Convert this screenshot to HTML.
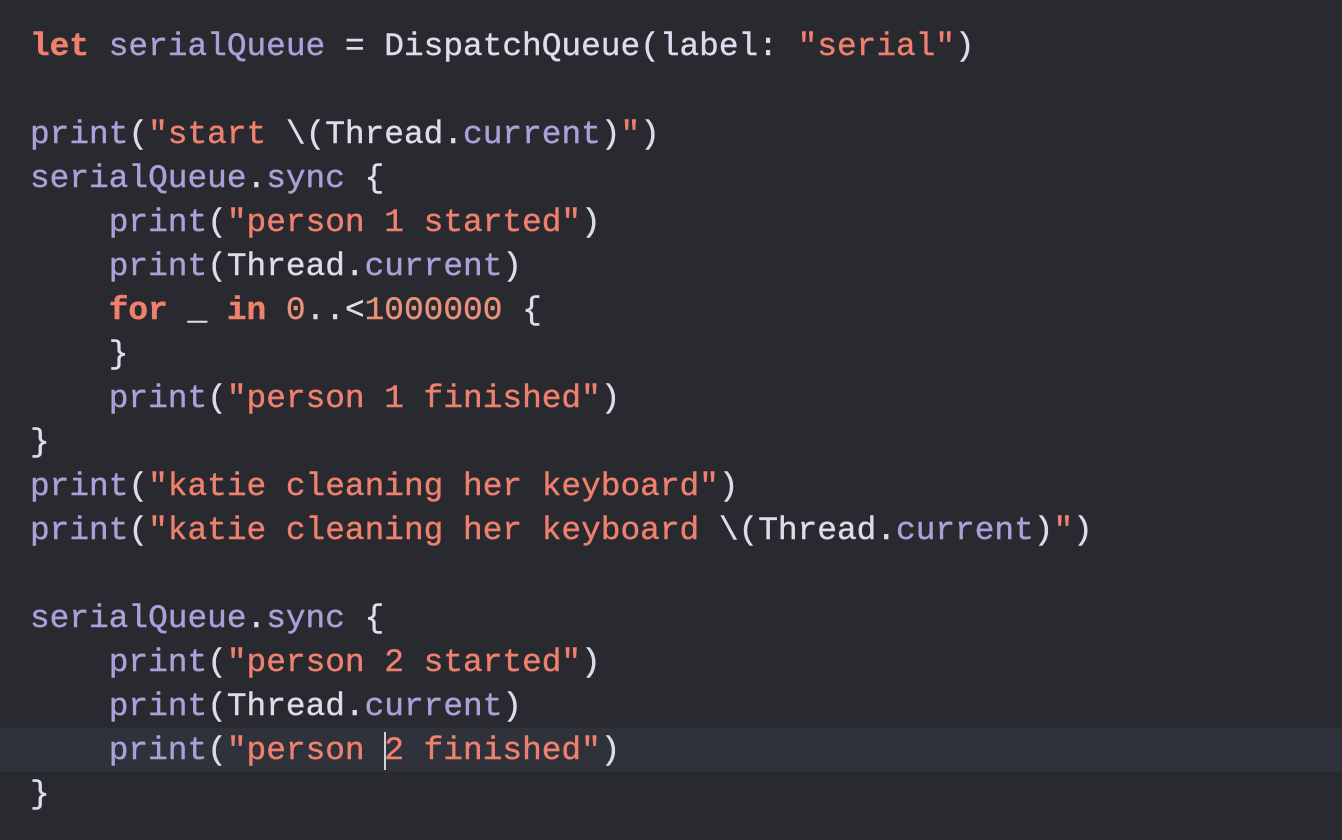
<!DOCTYPE html><html><head><style>
body{margin:0;width:1342px;height:840px;background:#292a30;overflow:hidden;font-family:"Liberation Mono",monospace;}
.l{position:absolute;left:30px;height:44px;line-height:44px;font-size:32.8px;white-space:pre;color:#dcdcec;-webkit-text-stroke:0.4px currentColor}
.p{color:#a8a2d8}.s{color:#f0806e}.k{color:#f0806e;font-weight:bold}.n{color:#e9917a}
.hl{position:absolute;left:0;top:728px;width:1342px;height:44px;background:#2f323a}
.cur{position:absolute;left:384px;top:732px;width:2px;height:38px;background:#d0d0e0}
</style></head><body>
<div class="hl"></div>
<div class="l" style="top:25px"><span class="k">let</span> <span class="p">serialQueue</span> = DispatchQueue(label: <span class="s">"serial"</span>)</div>
<div class="l" style="top:113px"><span class="p">print</span>(<span class="s">"start </span>\(Thread.<span class="p">current</span>)<span class="s">"</span>)</div>
<div class="l" style="top:157px"><span class="p">serialQueue</span>.<span class="p">sync</span> {</div>
<div class="l" style="top:201px">    <span class="p">print</span>(<span class="s">"person 1 started"</span>)</div>
<div class="l" style="top:245px">    <span class="p">print</span>(Thread.<span class="p">current</span>)</div>
<div class="l" style="top:289px">    <span class="k">for</span> _ <span class="k">in</span> <span class="n">0</span>..&lt;<span class="n">1000000</span> {</div>
<div class="l" style="top:333px">    }</div>
<div class="l" style="top:377px">    <span class="p">print</span>(<span class="s">"person 1 finished"</span>)</div>
<div class="l" style="top:421px">}</div>
<div class="l" style="top:465px"><span class="p">print</span>(<span class="s">"katie cleaning her keyboard"</span>)</div>
<div class="l" style="top:509px"><span class="p">print</span>(<span class="s">"katie cleaning her keyboard </span>\(Thread.<span class="p">current</span>)<span class="s">"</span>)</div>
<div class="l" style="top:597px"><span class="p">serialQueue</span>.<span class="p">sync</span> {</div>
<div class="l" style="top:641px">    <span class="p">print</span>(<span class="s">"person 2 started"</span>)</div>
<div class="l" style="top:685px">    <span class="p">print</span>(Thread.<span class="p">current</span>)</div>
<div class="l" style="top:729px">    <span class="p">print</span>(<span class="s">"person 2 finished"</span>)</div>
<div class="l" style="top:773px">}</div>
<div class="cur"></div>
</body></html>
